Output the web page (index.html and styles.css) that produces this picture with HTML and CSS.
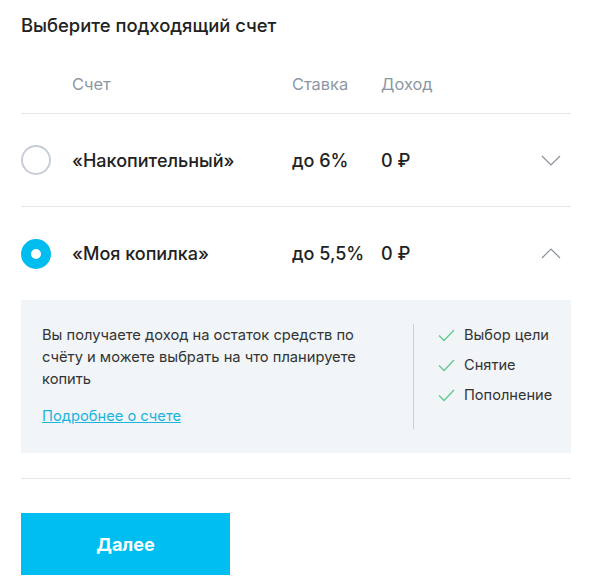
FILE: index.html
```html
<!DOCTYPE html>
<html lang="ru">

<head>
  <meta charset="UTF-8">
  <meta name="viewport" content="width=device-width, initial-scale=1.0">
  <title>Выбор счета</title>
  <link rel="stylesheet" href="styles.css">
</head>

<body>
  <div class="picker">
    <h2 class="picker-title">Выберите подходящий счет</h2>

    <div class="table-head">
      <span></span>
      <span>Счет</span>
      <span>Ставка</span>
      <span>Доход</span>
      <span></span>
    </div>

    <div class="account-row">
      <span class="radio"></span>
      <span class="account-name">«Накопительный»</span>
      <span class="account-rate">до 6%</span>
      <span class="account-income">0 ₽</span>
      <svg class="chevron" width="20" height="11" viewBox="0 0 20 11">
        <path d="M1 1 L10 10 L19 1" fill="none" stroke="#8a9099" stroke-width="1.2" />
      </svg>
    </div>

    <div class="account-row open">
      <span class="radio checked"></span>
      <span class="account-name">«Моя копилка»</span>
      <span class="account-rate">до 5,5%</span>
      <span class="account-income">0 ₽</span>
      <svg class="chevron" width="20" height="11" viewBox="0 0 20 11">
        <path d="M1 10 L10 1 L19 10" fill="none" stroke="#8a9099" stroke-width="1.2" />
      </svg>
    </div>

    <div class="details">
      <div class="details-text">
        <p>Вы получаете доход на остаток средств по счёту и можете выбрать на что планируете копить</p>
        <a href="#" class="details-link">Подробнее о счете</a>
      </div>
      <div class="details-divider"></div>
      <ul class="features">
        <li>
          <svg width="17" height="13" viewBox="0 0 17 13">
            <path d="M1 6.5 L6 11.5 L16 1" fill="none" stroke="#5ecb8c" stroke-width="1.3" />
          </svg>
          Выбор цели
        </li>
        <li>
          <svg width="17" height="13" viewBox="0 0 17 13">
            <path d="M1 6.5 L6 11.5 L16 1" fill="none" stroke="#5ecb8c" stroke-width="1.3" />
          </svg>
          Снятие
        </li>
        <li>
          <svg width="17" height="13" viewBox="0 0 17 13">
            <path d="M1 6.5 L6 11.5 L16 1" fill="none" stroke="#5ecb8c" stroke-width="1.3" />
          </svg>
          Пополнение
        </li>
      </ul>
    </div>

    <div class="bottom-line"></div>

    <button class="next-btn" type="button">Далее</button>
  </div>
</body>

</html>
```

FILE: styles.css
```css
body {
  margin: 0;
  font-family: Inter, Roboto, sans-serif;
  color: #222;
  background: #fff;
}

.picker {
  width: 550px;
  padding: 13px 0 0 21px;
}

.picker-title {
  margin: 0;
  font-size: 18.4px;
  font-weight: 500;
  line-height: 24px;
  color: #222;
}

.table-head,
.account-row {
  display: grid;
  grid-template-columns: 30px 241px 89px 1fr 20px;
  align-items: center;
  border-bottom: 1px solid #e3e8ec;
}

.table-head {
  margin-top: 17px;
  height: 59px;
  font-size: 16.4px;
  color: #8d97a2;
}

.table-head span:nth-child(2),
.account-name {
  padding-left: 21px;
}

.account-row {
  height: 92px;
  font-size: 18px;
  font-weight: 500;
  padding-right: 10px;
}

.account-row.open {
  border-bottom: none;
  height: 93px;
}

.radio {
  width: 26px;
  height: 26px;
  border: 2px solid #c7ced6;
  border-radius: 50%;
}

.radio.checked {
  width: 10px;
  height: 10px;
  border: 10px solid #00bdf0;
  background: #fff;
}

.chevron {
  display: block;
}

.details {
  display: flex;
  background: #f2f5f8;
  height: 153px;
  box-sizing: border-box;
  padding: 24px 0 0 21px;
}

.details-text {
  width: 340px;
  font-size: 14.7px;
  line-height: 22px;
  color: #333;
}

.details-text p {
  margin: 0 0 15px;
}

.details-link {
  color: #1ab4dc;
  text-decoration: underline;
}

.details-divider {
  width: 1px;
  height: 105px;
  background: #c9cfd4;
  margin-left: 31px;
}

.features {
  list-style: none;
  margin: -4px 0 0 24px;
  padding: 0;
  font-size: 14.6px;
  color: #333;
}

.features li {
  display: flex;
  align-items: center;
  gap: 9px;
  height: 30px;
}

.bottom-line {
  height: 1px;
  background: #e3e8ec;
  margin-top: 25px;
}

.next-btn {
  display: block;
  margin-top: 34px;
  width: 209px;
  height: 62px;
  border: none;
  background: #00bef0;
  color: #fff;
  font-family: Inter, Roboto, sans-serif;
  font-size: 18px;
  font-weight: 700;
  cursor: pointer;
}
```
